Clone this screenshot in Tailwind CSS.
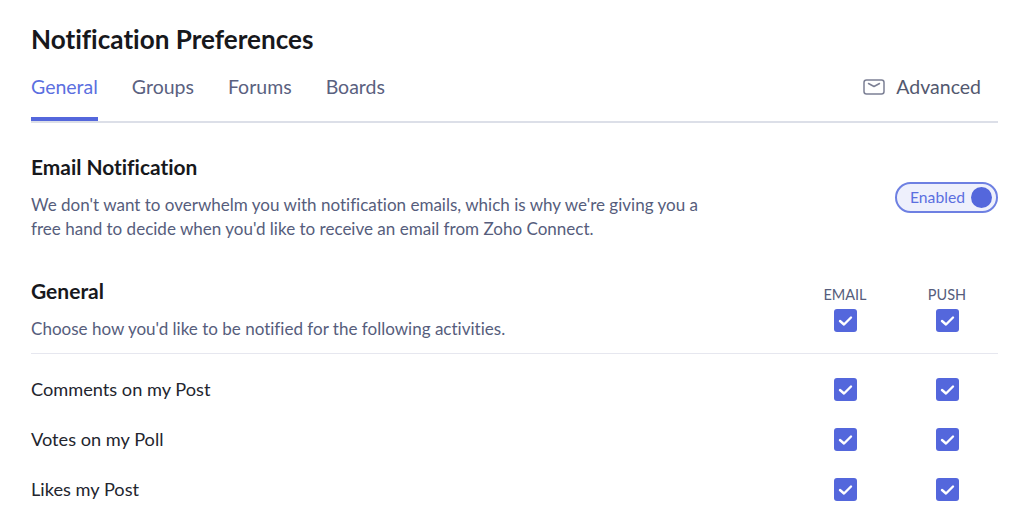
<!DOCTYPE html>
<html lang="en">
<head>
  <meta charset="UTF-8" />
  <title>Notification Preferences</title>
  <script src="https://cdn.jsdelivr.net/npm/@tailwindcss/browser@4"></script>
</head>
<body class="h-[513px] overflow-hidden bg-white font-['Lato',sans-serif] [font-variant-ligatures:none]">
  <div class="pl-[31px] pr-[26px] pt-[22px]">
    <h1 class="text-[26.1px] leading-[34px] font-bold text-[#17181c]">Notification Preferences</h1>

    <!-- Tabs -->
    <div class="mt-[14px] flex h-[53px] items-start justify-between border-b-2 border-[#dcdfe8] text-[19.5px] leading-[34px]">
      <div class="flex gap-[34px] text-[#5a6180]">
        <a class="h-[51px] border-b-[4px] border-[#5467dc] text-[#5b6fe0]">General</a>
        <a>Groups</a>
        <a>Forums</a>
        <a>Boards</a>
      </div>
      <div class="flex items-center gap-[11px] pr-[17px] text-[#53586f]">
        <svg width="22" height="16" viewBox="0 0 22 16" fill="none" stroke="#7c8095" stroke-width="1.5">
          <rect x="1" y="1" width="20" height="14" rx="2.5" />
          <path d="M5.5 4.5 L11 7.5 L16.5 4.5" stroke-linecap="round" stroke-linejoin="round" />
        </svg>
        <span>Advanced</span>
      </div>
    </div>

    <!-- Email notification -->
    <div class="mt-[29px] flex items-start justify-between">
      <div>
        <h2 class="text-[20.9px] leading-[30px] font-bold text-[#17181c]">Email Notification</h2>
        <p class="mt-[11px] w-[690px] text-[17.05px] leading-[24px] text-[#565d7c]">We don't want to overwhelm you with notification emails, which is why we're giving you a free hand to decide when you'd like to receive an email from Zoho Connect.</p>
      </div>
      <div class="mt-[30px] flex h-[31px] w-[103px] items-center justify-between rounded-full border-2 border-[#6e80e2] bg-[#eef0fc] pl-[13px] pr-[4px] text-[15.7px] text-[#5b6fe0]">
        <span>Enabled</span>
        <span class="size-[21px] rounded-full bg-[#5467dc]"></span>
      </div>
    </div>

    <!-- General -->
    <div class="mt-[35px] flex items-start justify-between border-b border-[#e6e7ef] pb-[12px]">
      <div>
        <h2 class="text-[21px] leading-[30px] font-bold text-[#17181c]">General</h2>
        <p class="mt-[11px] text-[17.05px] leading-[24px] text-[#565d7c]">Choose how you'd like to be notified for the following activities.</p>
      </div>
      <div class="mt-[10px] flex">
        <div class="flex w-[102px] flex-col items-center gap-[5px] text-[14.5px] leading-[18px] text-[#565d7c]">
          <span>EMAIL</span>
          <svg class="size-[23px]" viewBox="0 0 23 23"><rect width="23" height="23" rx="3" fill="#5467dc" /><path d="M6 12 L10 15.5 L17 8.5" fill="none" stroke="#fff" stroke-width="2.4" stroke-linecap="round" stroke-linejoin="round" /></svg>
        </div>
        <div class="flex w-[102px] flex-col items-center gap-[5px] text-[14.5px] leading-[18px] text-[#565d7c]">
          <span>PUSH</span>
          <svg class="size-[23px]" viewBox="0 0 23 23"><rect width="23" height="23" rx="3" fill="#5467dc" /><path d="M6 12 L10 15.5 L17 8.5" fill="none" stroke="#fff" stroke-width="2.4" stroke-linecap="round" stroke-linejoin="round" /></svg>
        </div>
      </div>
    </div>

    <!-- Rows -->
    <div class="mt-[10px] text-[18.2px] leading-[30px] text-[#23252e]">
      <div class="flex h-[50px] items-center justify-between">
        <span>Comments on my Post</span>
        <div class="flex">
          <div class="flex w-[102px] justify-center"><svg class="size-[23px]" viewBox="0 0 23 23"><rect width="23" height="23" rx="3" fill="#5467dc" /><path d="M6 12 L10 15.5 L17 8.5" fill="none" stroke="#fff" stroke-width="2.4" stroke-linecap="round" stroke-linejoin="round" /></svg></div>
          <div class="flex w-[102px] justify-center"><svg class="size-[23px]" viewBox="0 0 23 23"><rect width="23" height="23" rx="3" fill="#5467dc" /><path d="M6 12 L10 15.5 L17 8.5" fill="none" stroke="#fff" stroke-width="2.4" stroke-linecap="round" stroke-linejoin="round" /></svg></div>
        </div>
      </div>
      <div class="flex h-[50px] items-center justify-between">
        <span>Votes on my Poll</span>
        <div class="flex">
          <div class="flex w-[102px] justify-center"><svg class="size-[23px]" viewBox="0 0 23 23"><rect width="23" height="23" rx="3" fill="#5467dc" /><path d="M6 12 L10 15.5 L17 8.5" fill="none" stroke="#fff" stroke-width="2.4" stroke-linecap="round" stroke-linejoin="round" /></svg></div>
          <div class="flex w-[102px] justify-center"><svg class="size-[23px]" viewBox="0 0 23 23"><rect width="23" height="23" rx="3" fill="#5467dc" /><path d="M6 12 L10 15.5 L17 8.5" fill="none" stroke="#fff" stroke-width="2.4" stroke-linecap="round" stroke-linejoin="round" /></svg></div>
        </div>
      </div>
      <div class="flex h-[50px] items-center justify-between">
        <span>Likes my Post</span>
        <div class="flex">
          <div class="flex w-[102px] justify-center"><svg class="size-[23px]" viewBox="0 0 23 23"><rect width="23" height="23" rx="3" fill="#5467dc" /><path d="M6 12 L10 15.5 L17 8.5" fill="none" stroke="#fff" stroke-width="2.4" stroke-linecap="round" stroke-linejoin="round" /></svg></div>
          <div class="flex w-[102px] justify-center"><svg class="size-[23px]" viewBox="0 0 23 23"><rect width="23" height="23" rx="3" fill="#5467dc" /><path d="M6 12 L10 15.5 L17 8.5" fill="none" stroke="#fff" stroke-width="2.4" stroke-linecap="round" stroke-linejoin="round" /></svg></div>
        </div>
      </div>
    </div>
  </div>
</body>
</html>
